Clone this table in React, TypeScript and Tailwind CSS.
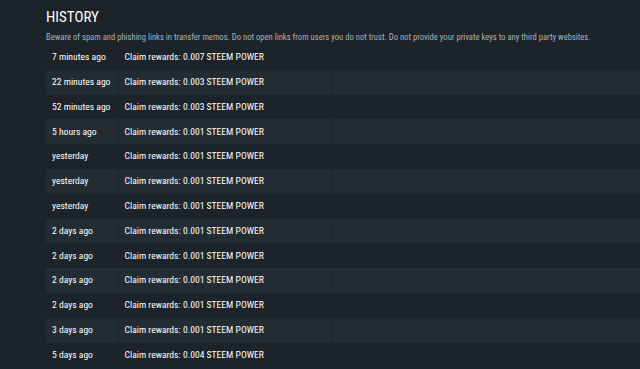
const rows: { when: string; what: string }[] = [
  { when: "7 minutes ago", what: "Claim rewards: 0.007 STEEM POWER" },
  { when: "22 minutes ago", what: "Claim rewards: 0.003 STEEM POWER" },
  { when: "52 minutes ago", what: "Claim rewards: 0.003 STEEM POWER" },
  { when: "5 hours ago", what: "Claim rewards: 0.001 STEEM POWER" },
  { when: "yesterday", what: "Claim rewards: 0.001 STEEM POWER" },
  { when: "yesterday", what: "Claim rewards: 0.001 STEEM POWER" },
  { when: "yesterday", what: "Claim rewards: 0.001 STEEM POWER" },
  { when: "2 days ago", what: "Claim rewards: 0.001 STEEM POWER" },
  { when: "2 days ago", what: "Claim rewards: 0.001 STEEM POWER" },
  { when: "2 days ago", what: "Claim rewards: 0.001 STEEM POWER" },
  { when: "2 days ago", what: "Claim rewards: 0.001 STEEM POWER" },
  { when: "3 days ago", what: "Claim rewards: 0.001 STEEM POWER" },
  { when: "5 days ago", what: "Claim rewards: 0.004 STEEM POWER" },
];

export default function App() {
  return (
    <div
      className="h-[369px] w-[640px] overflow-hidden bg-[#1c2329] pl-[46px] pt-[8px] text-white"
      style={{ fontFamily: '"Roboto Condensed", "Liberation Sans", sans-serif' }}
    >
      <h2 className="text-[15px] leading-[18px] font-normal">HISTORY</h2>
      <p className="mt-[5px] whitespace-nowrap text-[8.6px] leading-[12px] text-[#a8b3ba]">
        Beware of spam and phishing links in transfer memos. Do not open links from users you do not trust. Do not provide your private keys to any third party websites.
      </p>
      <table className="mt-[2px] w-[700px] table-fixed border-collapse text-[9.6px]">
        <colgroup>
          <col className="w-[72px]" />
          <col className="w-[213px]" />
          <col />
        </colgroup>
        <tbody>
          {rows.map((r, i) => (
            <tr key={i} className={i % 2 === 1 ? "bg-[#232c32]" : ""}>
              <td className="h-[24.8px] whitespace-nowrap px-[6px] py-0">{r.when}</td>
              <td className="whitespace-nowrap border-l border-[#1d252a] px-[6px] py-0">{r.what}</td>
              <td className="border-l border-[#1d252a]" />
            </tr>
          ))}
        </tbody>
      </table>
    </div>
  );
}
